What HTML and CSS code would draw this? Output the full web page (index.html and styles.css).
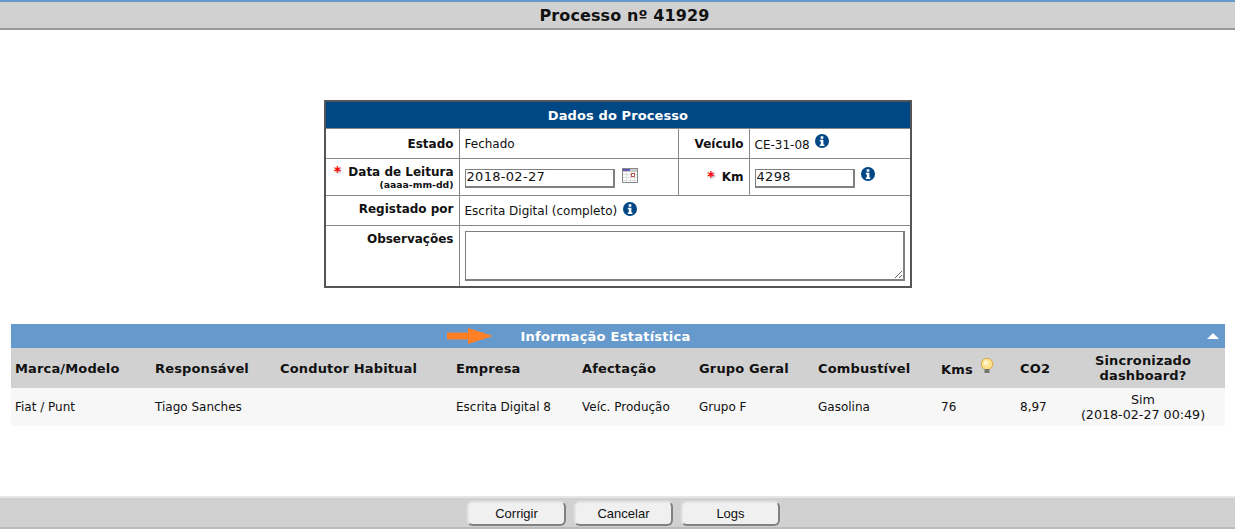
FILE: index.html
```html
<!DOCTYPE html>
<html lang="pt">
<head>
<meta charset="utf-8">
<title>Processo nº 41929</title>
<link rel="stylesheet" href="styles.css">
</head>
<body>
<svg class="defs" width="0" height="0" aria-hidden="true">
  <symbol id="info" viewBox="0 0 14 14">
    <circle cx="7" cy="7" r="7" fill="#004785"/>
    <rect x="5.6" y="2.2" width="2.8" height="2.5" rx="0.6" fill="#fff"/>
    <path d="M4.8 5.8h3.6v4.6h1v1.5H4.8v-1.5h1v-3.1h-1z" fill="#fff"/>
  </symbol>
</svg>
<header class="title-bar"><h1>Processo nº 41929</h1></header>
<main>
  <table class="form-table">
    <colgroup><col class="c1"><col class="c2"><col class="c3"><col class="c4"></colgroup>
    <thead><tr><th colspan="4" class="form-head">Dados do Processo</th></tr></thead>
    <tbody>
      <tr class="r1">
        <th>Estado</th>
        <td class="state">Fechado</td>
        <th>Veículo</th>
        <td><span class="inline-val">CE-31-08</span><svg class="i-info up"><use href="#info"/></svg></td>
      </tr>
      <tr class="r2">
        <th><span class="req">*</span> Data de Leitura<small>(aaaa-mm-dd)</small></th>
        <td>
          <div class="field-row">
            <input class="inp date" type="text" value="2018-02-27">
            <svg class="cal" viewBox="0 0 16 15" width="16" height="15">
              <rect x="0.5" y="0.5" width="15" height="14" fill="#fff" stroke="#888"/>
              <rect x="1" y="1" width="14" height="3" fill="#c8c8c8"/>
              <rect x="1" y="1" width="7" height="2" fill="#5a5ab8"/>
              <path d="M1 6.5h14M1 9.5h14M1 12.5h14M4.5 4v10M8.500 4v10M12.500 4v10" stroke="#ddd" fill="none"/>
              <rect x="9.500" y="5.500" width="3" height="3" fill="#fff" stroke="#b55"/>
            </svg>
          </div>
        </td>
        <th class="km-head"><span class="req">*</span> Km</th>
        <td>
          <div class="field-row km-row">
            <input class="inp km" type="text" value="4298">
            <svg class="i-info"><use href="#info"/></svg>
          </div>
        </td>
      </tr>
      <tr class="r3">
        <th>Registado por</th>
        <td colspan="3"><span class="inline-val">Escrita Digital (completo)</span><svg class="i-info reg"><use href="#info"/></svg></td>
      </tr>
      <tr class="r4">
        <th>Observações</th>
        <td colspan="3"><textarea class="obs"></textarea></td>
      </tr>
    </tbody>
  </table>

  <section class="stats">
    <div class="stats-bar">
      <svg class="arrow" width="46" height="16" viewBox="0 0 46 16"><path d="M0 4.500h21V0l25 8-25 8v-4.500H0z" fill="#ff7f27"/></svg>
      <h2>Informação Estatística</h2>
      <span class="collapse"></span>
    </div>
    <table class="stats-table">
      <colgroup>
        <col class="s1"><col class="s2"><col class="s3"><col class="s4"><col class="s5"><col class="s6"><col class="s7"><col class="s8"><col class="s9"><col class="s10">
      </colgroup>
      <thead>
        <tr>
          <th>Marca/Modelo</th><th>Responsável</th><th>Condutor Habitual</th><th>Empresa</th><th>Afectação</th><th>Grupo Geral</th><th>Combustível</th>
          <th class="kms">Kms
            <svg class="bulb" width="14" height="16" viewBox="0 0 14 16">
              <circle cx="7" cy="6" r="5.700" fill="#fde28a" stroke="#e0a94a"/>
              <circle cx="6" cy="5" r="2.500" fill="#fff6d0"/>
              <rect x="4.500" y="11" width="5" height="4" fill="#77776f"/>
            </svg>
          </th>
          <th>CO2</th><th class="center sync-head">Sincronizado dashboard?</th>
        </tr>
      </thead>
      <tbody>
        <tr>
          <td>Fiat / Punt</td><td>Tiago Sanches</td><td></td><td>Escrita Digital 8</td><td>Veíc. Produção</td><td>Grupo F</td><td>Gasolina</td><td>76</td><td>8,97</td>
          <td class="center sync">Sim<br>(2018-02-27 00:49)</td>
        </tr>
      </tbody>
    </table>
  </section>
</main>
<footer class="actions">
  <button type="button">Corrigir</button>
  <button type="button">Cancelar</button>
  <button type="button">Logs</button>
</footer>
</body>
</html>
```
FILE: styles.css
```css
* { box-sizing: border-box; }
html, body { margin: 0; height: 530px; overflow: hidden; }
body {
  font-family: "DejaVu Sans", Verdana, sans-serif;
  font-size: 12px;
  color: #111;
  background: #fff;
  display: flex;
  flex-direction: column;
}
.defs { position: absolute; }
.title-bar {
  height: 30px;
  background: #d1d1d1;
  border-top: 2px solid #6699cc;
  border-bottom: 2px solid #999;
  text-align: center;
  padding: 1px 0 0 14px;
}
.title-bar h1 { margin: 0; font-size: 16px; letter-spacing: 0.1px; line-height: 26px; font-weight: bold; }
main { flex: 1; padding: 70px 10px 0 11px; }

.form-table {
  width: 588px;
  margin: 0 auto 0 313px;
  border-collapse: collapse;
  table-layout: fixed;
  border: 2px solid #555;
}
.c1 { width: 134px; }
.c2 { width: 219px; }
.c3 { width: 71px; }
.form-head {
  height: 27px;
  background: #004785;
  color: #fff;
  font-size: 13px;
  letter-spacing: 0.1px;
  text-align: center;
  padding: 2px 0 0;
  border: 0;
}
.form-table tbody th, .form-table tbody td { border: 1px solid #888; padding: 0 5px; }
.form-table tbody th { text-align: right; font-size: 12px; font-weight: bold; white-space: nowrap; }
.form-table tbody td { font-size: 12px; }
.r1 { height: 30px; }
.r2 { height: 37px; }
.r3 { height: 30px; }
.r4 { height: 62px; }
.form-table tbody .r1 th, .form-table tbody .r1 .state { padding-top: 2px; }
.form-table tbody .r2 th { line-height: 13px; vertical-align: top; padding-top: 6px; }
.form-table tbody .r2 th.km-head { padding-top: 0; vertical-align: middle; }
.form-table tbody .r3 th { vertical-align: top; padding-top: 6px; }
.form-table tbody .r4 th { vertical-align: top; padding-top: 6px; }
.form-table tbody .r4 td { vertical-align: top; padding-top: 5px; }
small { display: block; font-size: 9.300px; line-height: 12px; }
.req { color: #f00; font-size: 14px; margin-right: 3px; text-shadow: 1px 1px 2px #aaa; }
.field-row { display: flex; align-items: flex-start; height: 22px; padding-top: 3px; }
.km-row { gap: 5px; }
.inp {
  font: 13px "DejaVu Sans", Verdana, sans-serif;
  letter-spacing: 0.3px;
  color: #111;
  height: 19px;
  padding: 0 1px 2px;
  background: #fff;
  border: 2px solid #808080;
  border-top-width: 1px;
  border-left-width: 1px;
}
.date { width: 150px; }
.km { width: 100px; }
.cal { margin: -1px 0 0 7px; }
.i-info { width: 14px; height: 14px; display: inline-block; vertical-align: 1px; }
.km-row .i-info { margin: -2px 0 0 1px; }
.i-info.up { margin-left: 5px; vertical-align: 1px; }
.i-info.reg { margin-left: 6px; vertical-align: -1px; }
.obs {
  display: block;
  width: 440px;
  height: 50px;
  border: 2px solid #808080;
  border-top-width: 1px;
  border-left-width: 1px;
  background: #fff;
  margin: 0;
}

.stats { margin-top: 36px; }
.stats-bar {
  height: 24px;
  background: #6699cc;
  color: #fff;
  display: flex;
  align-items: center;
  justify-content: center;
  position: relative;
  padding-right: 25px;
}
.stats-bar h2 { margin: 0; font-size: 13px; font-weight: bold; letter-spacing: 0.25px; }
.arrow { position: absolute; left: 436px; top: 4px; }
.collapse {
  position: absolute;
  right: 6px;
  top: 9px;
  border-left: 6px solid transparent;
  border-right: 6px solid transparent;
  border-bottom: 6px solid #fff;
}
.stats-table { width: 100%; border-collapse: collapse; table-layout: fixed; }
.s1 { width: 140px; } .s2 { width: 125px; } .s3 { width: 176px; } .s4 { width: 126px; }
.s5 { width: 117px; } .s6 { width: 119px; } .s7 { width: 123px; } .s8 { width: 79px; }
.s9 { width: 55px; }
.stats-table th, .stats-table td { padding: 0 4px; text-align: left; }
.stats-table th { background: #d1d1d1; height: 40px; padding-top: 1px; font-size: 13px; letter-spacing: 0.15px; line-height: 16px; font-weight: bold; }
.stats-table td { background: #f7f7f7; height: 38px; font-size: 12px; line-height: 15px; }
.stats-table .center { text-align: center; padding-right: 14px; line-height: 15px; }
.stats-table .sync-head { padding-top: 0; padding-bottom: 1px; }
.stats-table .sync { font-size: 12.700px; }
.stats-table .kms { padding-top: 3px; }
.bulb { margin: -8px 0 0 3px; vertical-align: baseline; }

.actions {
  height: 33px;
  margin-bottom: 1px;
  background: #d1d1d1;
  border-top: 2px solid #e6e6e6;
  border-bottom: 2px solid #bbb;
  display: flex;
  justify-content: center;
  gap: 8px;
  padding: 3px 0 0 12px;
}
.actions button {
  width: 99px;
  height: 25px;
  font: 13px "Liberation Sans", Arial, sans-serif;
  color: #111;
  background: #f0f0f0;
  border: 2px solid #e4e4e4;
  border-right-color: #808080;
  border-bottom-color: #808080;
  border-radius: 6px;
  padding: 0;
}
```
